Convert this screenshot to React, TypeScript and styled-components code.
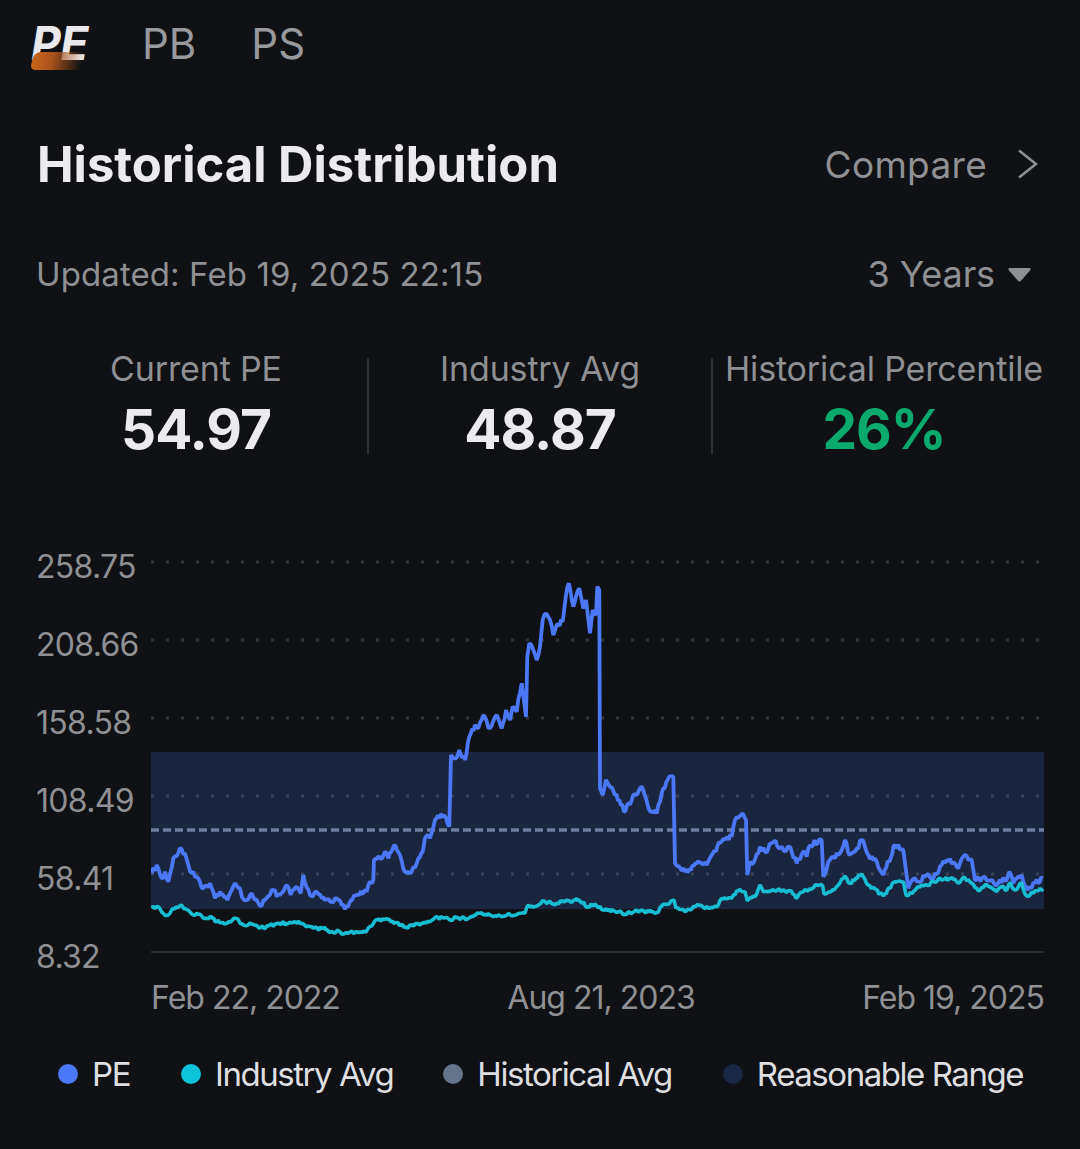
import styled, { createGlobalStyle } from 'styled-components';

const GlobalStyle = createGlobalStyle`
  html, body {
    margin: 0;
    background: #0f1114;
  }
`;

// traced from the picture, [x, y] in page pixels
const fromLeft = (x: number, y: number): number[] => [140 + x / 3, 550 + y / 3];
const fromRight = (x: number, y: number): number[] => [590 + x / 3, 740 + y / 3];

const bluePoints = [
  ...[
    [35, 970], [50, 945], [65, 985], [75, 965], [85, 995], [100, 925], [120, 895], [135, 910], [155, 970],
    [175, 985], [190, 1015], [210, 1000], [225, 1045], [240, 1025], [262, 1050], [285, 1000], [300, 1015],
    [312, 1050], [335, 1030], [358, 1065], [375, 1050], [400, 1020], [410, 1040], [440, 1005], [452, 1035],
    [470, 1010], [482, 1030], [490, 975], [510, 1035], [528, 1025], [545, 1045], [575, 1055], [590, 1045],
    [615, 1078], [650, 1035], [680, 1025], [690, 995], [700, 990], [702, 930], [720, 925], [735, 905],
    [745, 925], [762, 885], [780, 915], [795, 965], [815, 965], [835, 925], [848, 905], [855, 865],
    [870, 865], [885, 810], [912, 795], [928, 830], [933, 615], [945, 625], [958, 600], [975, 630],
    [988, 560], [1005, 525], [1015, 535], [1030, 495], [1050, 535], [1070, 495], [1085, 535], [1098, 480],
    [1110, 510], [1118, 470], [1130, 485], [1145, 400], [1158, 500], [1162, 320], [1168, 280], [1180, 300],
    [1190, 330], [1200, 290], [1208, 210], [1218, 190], [1230, 210], [1240, 255], [1250, 225], [1268, 215],
    [1278, 135], [1287, 100], [1300, 170], [1318, 115], [1330, 175], [1338, 150], [1350, 250], [1358, 180],
    [1368, 195], [1372, 110], [1378, 120],
  ].map(([x, y]) => fromLeft(x, y)),
  ...[
    [30, 145], [38, 165], [48, 120], [60, 140], [75, 165], [88, 180], [102, 215], [125, 180], [150, 145],
    [160, 150], [178, 210], [200, 220], [215, 160], [238, 110], [250, 110], [255, 370], [285, 395],
    [320, 370], [350, 375], [365, 345], [395, 305], [425, 290], [435, 240], [458, 220], [468, 240],
    [472, 405], [480, 365], [490, 370], [510, 320], [525, 335], [552, 305], [580, 330], [597, 320],
    [620, 370], [640, 335], [650, 350], [660, 315], [695, 300], [700, 410], [715, 365], [730, 350],
    [745, 345], [765, 300], [778, 345], [795, 335], [815, 300], [835, 345], [860, 365], [880, 405],
    [915, 315], [940, 330], [955, 445], [975, 415], [990, 425], [1010, 405], [1030, 415], [1050, 380],
    [1070, 360], [1095, 370], [1105, 385], [1120, 350], [1145, 360], [1155, 420], [1185, 410], [1220, 435],
    [1230, 420], [1250, 420], [1258, 395], [1270, 430], [1295, 405], [1312, 450], [1335, 430], [1358, 415],
  ].map(([x, y]) => fromRight(x, y)),
];

const cyanPoints = [
  ...[
    [35, 1075], [55, 1070], [70, 1090], [85, 1095], [100, 1075], [122, 1065], [155, 1092], [175, 1093],
    [200, 1105], [212, 1098], [230, 1115], [262, 1120], [285, 1105], [310, 1125], [335, 1123], [358, 1135],
    [385, 1128], [410, 1122], [440, 1120], [462, 1115], [490, 1122], [520, 1135], [550, 1135], [580, 1148],
    [592, 1140], [610, 1152], [650, 1145], [680, 1143], [705, 1112], [735, 1108], [770, 1118], [800, 1133],
    [830, 1122], [850, 1120], [885, 1103], [915, 1103], [930, 1110], [950, 1103], [985, 1105], [1025, 1088],
    [1050, 1096], [1075, 1095], [1090, 1098], [1140, 1090], [1155, 1090], [1165, 1065], [1190, 1068],
    [1207, 1053], [1240, 1062], [1270, 1053], [1318, 1050], [1345, 1070], [1350, 1072],
  ].map(([x, y]) => fromLeft(x, y)),
  ...[
    [0, 495], [20, 497], [40, 510], [70, 512], [105, 522], [150, 512], [190, 515], [200, 518], [215, 498],
    [252, 480], [258, 505], [285, 515], [320, 495], [355, 505], [385, 495], [395, 475], [425, 475],
    [445, 452], [465, 455], [472, 482], [495, 470], [510, 435], [520, 455], [550, 450], [600, 452],
    [618, 475], [640, 455], [680, 435], [698, 438], [702, 462], [740, 440], [765, 408], [780, 430],
    [815, 402], [835, 435], [880, 468], [915, 425], [940, 425], [948, 465], [970, 455], [980, 445],
    [1010, 435], [1050, 415], [1095, 418], [1105, 430], [1120, 412], [1145, 430], [1165, 452], [1185, 435],
    [1220, 455], [1235, 440], [1250, 450], [1258, 430], [1275, 450], [1295, 430], [1305, 462], [1320, 465],
    [1335, 452], [1360, 447],
  ].map(([x, y]) => fromRight(x, y)),
];

// small saw-tooth noise between the traced points, steep jumps stay clean
const jagged = (points: number[][], amount: number, seed: number) => {
  let state = seed;
  const noise = () => {
    state = (state * 16807) % 2147483647;
    return (state / 2147483647 - 0.5) * amount;
  };
  const out: string[] = [];
  points.forEach(([x, y], i) => {
    if (i > 0) {
      const [px, py] = points[i - 1];
      const steps = Math.floor((x - px) / 1.4);
      if (Math.abs(y - py) / Math.max(x - px, 0.1) < 6) {
        for (let s = 1; s < steps; s++) {
          const t = s / steps;
          out.push(`${(px + (x - px) * t).toFixed(1)} ${(py + (y - py) * t + noise()).toFixed(1)}`);
        }
      }
    }
    out.push(`${x.toFixed(1)} ${y.toFixed(1)}`);
  });
  return `M${out.join('L')}`;
};

const gridLines = [562, 640, 718, 796, 874];
const yLabels = ['258.75', '208.66', '158.58', '108.49', '58.41', '8.32'];
const xLabels = ['Feb 22, 2022', 'Aug 21, 2023', 'Feb 19, 2025'];
const stats = [
  { label: 'Current PE', value: '54.97' },
  { label: 'Industry Avg', value: '48.87' },
  { label: 'Historical Percentile', value: '26%', good: true },
];
const legend = [
  { label: 'PE', color: '#4a78f6', gap: 51 },
  { label: 'Industry Avg', color: '#0cc3da', gap: 50 },
  { label: 'Historical Avg', color: '#667489', gap: 51 },
  { label: 'Reasonable Range', color: '#1a2745', gap: 0 },
];

const App = () => (
  <Page>
    <GlobalStyle />
    <Tabs>
      <ActiveTab>PE</ActiveTab>
      <Tab>PB</Tab>
      <Tab>PS</Tab>
    </Tabs>

    <TitleRow>
      <Title>Historical Distribution</Title>
      <CompareLink>
        Compare
        <svg width="22" height="30" viewBox="0 0 22 30" fill="none" stroke="#8f9093" strokeWidth="2.6">
          <path d="M3 1.5 20 15 3 28.5" />
        </svg>
      </CompareLink>
    </TitleRow>

    <UpdateRow>
      <span>Updated: Feb 19, 2025 22:15</span>
      <RangePicker>
        3 Years
        <svg width="23" height="15" viewBox="0 0 23 15" fill="#8f9093">
          <path d="M2 1h19c1.500 0 2 1.200 1.200 2.200l-9.500 10.800c-.7.800-1.700.8-2.400 0L.8 3.200C0 2.200.5 1 2 1z" />
        </svg>
      </RangePicker>
    </UpdateRow>

    <StatsRow>
      {stats.map((stat) => (
        <StatCell key={stat.label}>
          <StatLabel>{stat.label}</StatLabel>
          <StatValue $good={stat.good}>{stat.value}</StatValue>
        </StatCell>
      ))}
    </StatsRow>

    <ChartArea>
      <YAxis>
        {yLabels.map((label) => (
          <YLabel key={label}>{label}</YLabel>
        ))}
      </YAxis>
      <PlotColumn>
        <svg width="893" height="415" viewBox="151 550 893 415">
          <rect x="151" y="752" width="893" height="157" fill="#1a2540" />
          {gridLines.map((y) => (
            <line
              key={y}
              x1="151"
              x2="1044"
              y1={y}
              y2={y}
              stroke="#6f7480"
              strokeOpacity="0.38"
              strokeWidth="3"
              strokeDasharray="3 12"
            />
          ))}
          <line x1="151" x2="1044" y1="830" y2="830" stroke="#6e7ca0" strokeWidth="3.4" strokeDasharray="8 4" />
          <path d={jagged(bluePoints, 6, 4242)} fill="none" stroke="#4a78f6" strokeWidth="3.8" strokeLinejoin="bevel" />
          <path d={jagged(cyanPoints, 3.5, 1717)} fill="none" stroke="#17bdd2" strokeWidth="3.6" strokeLinejoin="bevel" />
          <line x1="150" x2="1044" y1="952" y2="952" stroke="#34363a" strokeWidth="1.500" />
        </svg>
        <XAxis>
          {xLabels.map((label) => (
            <span key={label}>{label}</span>
          ))}
        </XAxis>
      </PlotColumn>
    </ChartArea>

    <Legend>
      {legend.map((item) => (
        <LegendItem key={item.label} $gap={item.gap}>
          <LegendDot $color={item.color} />
          {item.label}
        </LegendItem>
      ))}
    </Legend>
  </Page>
);

const Page = styled.div`
  width: 1080px;
  height: 1149px;
  overflow: hidden;
  background: #0f1114;
  font-family: Inter, 'Liberation Sans', sans-serif;
  color: #8f9093;
`;

const Tabs = styled.div`
  display: flex;
  align-items: center;
  gap: 55px;
  height: 86px;
  padding-left: 31px;
`;

const Tab = styled.div`
  font-size: 42px;
  font-weight: 400;
  color: #98999c;
`;

const ActiveTab = styled.div`
  position: relative;
  margin-right: -1px;
  font-size: 46px;
  font-weight: 700;
  font-style: italic;
  letter-spacing: -0.5px;
  color: #e9e9eb;
  &::after {
    content: '';
    position: absolute;
    left: 1px;
    bottom: 1px;
    width: 50px;
    height: 18px;
    border-radius: 7px 3px 0 5px;
    transform: skewX(-12deg);
    background: linear-gradient(90deg, #c9661a 0%, #a8521a 40%, rgba(120, 60, 20, 0) 100%);
  }
`;

const TitleRow = styled.div`
  display: flex;
  align-items: center;
  justify-content: space-between;
  height: 70px;
  margin-top: 43px;
  padding: 0 42px 0 37px;
`;

const Title = styled.h1`
  margin: 0;
  font-size: 49px;
  font-weight: 700;
  color: #ebebed;
`;

const CompareLink = styled.div`
  display: flex;
  align-items: center;
  gap: 29px;
  font-size: 37px;
  letter-spacing: 0.3px;
`;

const UpdateRow = styled.div`
  display: flex;
  align-items: center;
  justify-content: space-between;
  height: 50px;
  margin-top: 50px;
  padding: 0 49px 0 36px;
  font-size: 33px;
  letter-spacing: 0.1px;
`;

const RangePicker = styled.div`
  display: flex;
  align-items: center;
  gap: 13px;
  font-size: 36px;
  letter-spacing: -0.1px;
`;

const StatsRow = styled.div`
  display: grid;
  grid-template-columns: 342px 344px 344px;
  grid-template-rows: 96px;
  margin-top: 59px;
  padding-left: 25px;
`;

const StatCell = styled.div`
  display: flex;
  flex-direction: column;
  align-items: center;
  white-space: nowrap;
  & + & {
    border-left: 2px solid #2e3034;
  }
`;

const StatLabel = styled.div`
  font-size: 34px;
  line-height: 22px;
  letter-spacing: -0.15px;
`;

const StatValue = styled.div<{ $good?: boolean }>`
  margin-top: 22px;
  font-size: 55px;
  line-height: 54px;
  font-weight: 700;
  letter-spacing: -1px;
  color: ${({ $good }) => ($good ? '#0aa96c' : '#ebebed')};
`;

const ChartArea = styled.div`
  display: grid;
  grid-template-columns: 115px 893px;
  margin-top: 96px;
  padding-left: 36px;
`;

const YAxis = styled.div`
  display: flex;
  flex-direction: column;
  padding-top: 1px;
`;

const YLabel = styled.div`
  height: 78px;
  line-height: 32px;
  font-size: 32px;
  letter-spacing: -0.7px;
  white-space: nowrap;
`;

const PlotColumn = styled.div`
  display: flex;
  flex-direction: column;
  svg {
    display: block;
  }
`;

const XAxis = styled.div`
  display: flex;
  justify-content: space-between;
  margin-top: 13px;
  font-size: 32px;
  letter-spacing: -1px;
  white-space: nowrap;
`;

const Legend = styled.div`
  display: flex;
  align-items: center;
  margin-top: 35px;
  padding-left: 58px;
`;

const LegendItem = styled.div<{ $gap: number }>`
  display: flex;
  align-items: center;
  gap: 14px;
  margin-right: ${({ $gap }) => $gap}px;
  font-size: 33px;
  letter-spacing: -1.45px;
  color: #dfdfe1;
  white-space: nowrap;
`;

const LegendDot = styled.span<{ $color: string }>`
  width: 20px;
  height: 20px;
  border-radius: 50%;
  background: ${({ $color }) => $color};
`;

export default App;
